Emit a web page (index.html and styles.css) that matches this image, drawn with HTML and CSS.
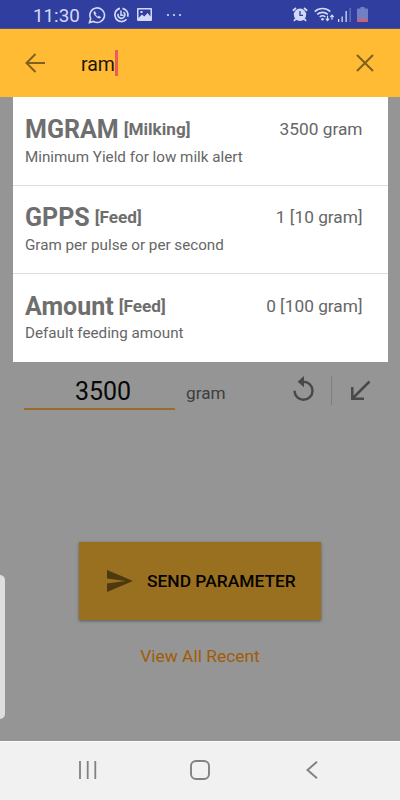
FILE: index.html
```
<!DOCTYPE html>
<html lang="en">

<head>
    <meta charset="utf-8">
    <title>Send Parameter</title>
    <meta name="viewport" content="width=device-width, initial-scale=1">
    <link rel="stylesheet" href="styles.css">
</head>

<body>
    <header class="status-bar">
        <span class="clock">11:30</span>
        <svg class="whatsapp" width="18" height="18" viewBox="0 0 18 18" fill="none" stroke="#d3daf5">
            <path d="M1.500 16.500l1.200-4A7.300 7.300 0 1 1 5.400 15.400z" stroke-width="1.600"/>
            <path d="M6.500 5.200c-1.500 1.500.2 4 1.600 5.300 1.500 1.400 3.600 2.400 4.600.8l-1.900-1.200-1.100.9c-1-.5-1.900-1.400-2.400-2.400l.8-1z" fill="#d3daf5" stroke-width=".6"/>
        </svg>
        <svg class="sync" width="17" height="16" viewBox="0 0 17 16" fill="none" stroke="#d3daf5" stroke-width="1.700">
            <path d="M7 1.300A6.700 6.700 0 1 0 13.500 12.300M9.500 1.300A6.700 6.700 0 0 1 14.700 9.800"/>
            <path d="M10.500 5.200a3.400 3.400 0 1 1-5.300 1.600M8 3.500v4.700h2.500" stroke-width="1.500"/>
        </svg>
        <svg class="photo" width="15" height="13" viewBox="0 0 15 13">
            <path fill="#d3daf5" fill-rule="evenodd" d="M1 0h13a1 1 0 0 1 1 1v11a1 1 0 0 1-1 1H1a1 1 0 0 1-1-1V1a1 1 0 0 1 1-1zm.5 1.500v8.500L5 6.500l2.300 2L10.500 5l3 3.500v-7zM3.500 3h2v2h-2z"/>
        </svg>
        <svg class="more" width="16" height="4" viewBox="0 0 16 4" fill="#d3daf5">
            <circle cx="2" cy="2" r="1.100"/><circle cx="8" cy="2" r="1.100"/><circle cx="14" cy="2" r="1.100"/>
        </svg>
        <svg class="alarm" width="16" height="15" viewBox="0 0 16 15">
            <path d="M.8 3.700L4 1M15.200 3.700L12 1M3.500 12L2 14M12.500 12l1.500 2" stroke="#d3daf5" stroke-width="1.800"/>
            <circle cx="8" cy="7.800" r="6.200" fill="#d3daf5"/>
            <path d="M8 4v4.300h3" fill="none" stroke="#303f9f" stroke-width="1.300"/>
        </svg>
        <svg class="wifi" width="21" height="15" viewBox="0 0 21 15" fill="none" stroke="#d3daf5" stroke-width="1.600">
            <path d="M.7 4.600a11.500 11.500 0 0 1 15.600 0M3.200 7.400a8 8 0 0 1 10.600 0M5.700 10a4.500 4.500 0 0 1 5.600-.2"/>
            <circle cx="8.500" cy="12.200" r="1.300" fill="#d3daf5" stroke="none"/>
            <path d="M13.500 8.800v4.500M11.800 11.600l1.700 1.900 1.700-1.900M18 12.800V8.300M16.300 10L18 8.100 19.700 10" stroke-width="1.200"/>
        </svg>
        <svg class="signal" width="14" height="14" viewBox="0 0 14 14" fill="#d3daf5">
            <path d="M0 11h1.300v3H0zM3.500 8.500h1.300V14H3.500zM7.500 3h1.300v11H7.500z"/>
            <path d="M11.500 0h1.300v14h-1.300z" opacity=".35"/>
        </svg>
        <svg class="battery" width="11" height="15" viewBox="0 0 11 15">
            <path fill="#7180c4" d="M3.500 0h4v1.500H10a1 1 0 0 1 1 1V12H0V2.500a1 1 0 0 1 1-1h2.500z"/>
            <path fill="#c7666f" d="M0 12h11v2a1 1 0 0 1-1 1H1a1 1 0 0 1-1-1z"/>
        </svg>
    </header>

    <div class="search-bar">
        <svg class="back" width="20" height="20" viewBox="0 0 20 20" fill="none" stroke="#80601f" stroke-width="2">
            <path d="M20 10H1.500M10.500 1L1.500 10l9 9"/>
        </svg>
        <span class="query">ram</span>
        <span class="caret"></span>
        <svg class="clear" width="18" height="18" viewBox="0 0 18 18" fill="none" stroke="#80601f" stroke-width="2">
            <path d="M1 1l16 16M17 1L1 17"/>
        </svg>
    </div>

    <main>
        <ul class="results">
            <li>
                <div class="title-row">
                    <span class="name">MGRAM</span>
                    <span class="group">[Milking]</span>
                    <span class="value">3500 gram</span>
                </div>
                <p>Minimum Yield for low milk alert</p>
            </li>
            <li>
                <div class="title-row">
                    <span class="name">GPPS</span>
                    <span class="group">[Feed]</span>
                    <span class="value">1 [10 gram]</span>
                </div>
                <p>Gram per pulse or per second</p>
            </li>
            <li>
                <div class="title-row">
                    <span class="name">Amount</span>
                    <span class="group">[Feed]</span>
                    <span class="value">0 [100 gram]</span>
                </div>
                <p>Default feeding amount</p>
            </li>
        </ul>

        <div class="field-row">
            <span class="field">3500</span>
            <span class="unit">gram</span>
            <svg class="reset" width="22" height="26" viewBox="0 0 22 26">
                <path d="M10.500 5.700a9 9 0 1 1-9 9" fill="none" stroke="#494949" stroke-width="2.500"/>
                <path d="M11 0v11.200L4.600 5.700z" fill="#494949"/>
            </svg>
            <span class="divider"></span>
            <svg class="arrow" width="21" height="21" viewBox="0 0 21 21" fill="none" stroke="#494949" stroke-width="2.500">
                <path d="M19.500 1.500L2.500 18.500M2.300 7v11.700H14"/>
            </svg>
        </div>

        <div class="send">
            <svg width="26" height="22" viewBox="0 0 26 22">
                <path d="M0 0l26 11L0 22v-8.600L18.500 11 0 8.600z" fill="#4d3910"/>
            </svg>
            <span>SEND PARAMETER</span>
        </div>
        <a class="recent">View All Recent</a>
        <div class="edge-handle"></div>
    </main>

    <nav class="nav-bar">
        <svg width="18" height="18" viewBox="0 0 18 18" stroke="#818181" stroke-width="1.800">
            <path d="M1 0v18M8.700 0v18M16.300 0v18"/>
        </svg>
        <svg class="home" width="20" height="20" viewBox="0 0 20 20" fill="none" stroke="#818181" stroke-width="1.900">
            <rect x="1" y="1" width="18" height="18" rx="5"/>
        </svg>
        <svg width="12" height="18" viewBox="0 0 12 18" fill="none" stroke="#818181" stroke-width="1.900">
            <path d="M11 .7L1.500 9l9.500 8.300"/>
        </svg>
    </nav>
</body>

</html>
```
FILE: styles.css
```
body {
    margin: 0;
    height: 800px;
    display: flex;
    flex-direction: column;
    overflow: hidden;
    background: #959595;
    font-family: Roboto, "Liberation Sans", sans-serif;
}

svg {
    display: block;
    flex: none;
}

/* status bar */
.status-bar {
    display: flex;
    align-items: center;
    height: 29px;
    box-sizing: border-box;
    padding: 1px 0 0 33px;
    border-bottom: 1px solid #5c5277;
    background: #303f9f;
}

.clock {
    width: 55px;
    color: #d3daf5;
    font-size: 18.8px;
    line-height: 26px;
    padding-top: 2px;
}

.sync {
    margin-left: 7px;
}

.photo {
    margin-left: 7px;
}

.more {
    margin-left: 14px;
}

.alarm {
    margin-left: 110px;
}

.wifi {
    margin-left: 6px;
}

.signal {
    margin-left: 3px;
}

.battery {
    margin-left: 5px;
}

/* search bar */
.search-bar {
    display: flex;
    align-items: center;
    height: 68px;
    padding: 0 26px 0 25px;
    background: #ffbb33;
}

.query {
    margin-left: 36px;
    padding-top: 2px;
    font-size: 19.5px;
    color: #1c1608;
}

.caret {
    width: 3px;
    height: 26px;
    background: #f05a55;
}

.clear {
    margin-left: auto;
}

main {
    position: relative;
    flex: 1;
}

/* search results */
.results {
    margin: 0 12.5px;
    padding: 0;
    list-style: none;
    background: #fff;
    color: #6e6e6e;
}

.results li {
    height: 88px;
    box-sizing: border-box;
    padding: 17px 25px 0 12.500px;
}

.results li + li {
    padding-top: 16px;
    border-top: 1px solid #dcdcdc;
}

.results li:last-child {
    height: 88.500px;
    padding-top: 17px;
}

.title-row {
    display: flex;
    align-items: center;
    line-height: 30px;
}

.name {
    padding-top: 1px;
    font-size: 25px;
    font-weight: bold;
}

.group,
.value {
    padding-bottom: 2px;
    line-height: 28px;
}

.group {
    margin-left: 5px;
    font-size: 17.2px;
    font-weight: bold;
}

.value {
    margin-left: auto;
    font-size: 17.3px;
    color: #666;
}

.results p {
    margin: 2px 0 0;
    font-size: 15.2px;
    line-height: 20px;
    color: #666;
}

.results li:last-child p {
    margin-top: 1px;
}

/* parameter value */
.field-row {
    display: flex;
    align-items: center;
    height: 48.500px;
    padding: 0 29px 0 24px;
}

.field {
    width: 151px;
    height: 48.500px;
    box-sizing: border-box;
    padding-left: 7px;
    border-bottom: 2px solid #996c2c;
    text-align: center;
    font-size: 25px;
    line-height: 60px;
    color: #080808;
}

.unit {
    margin: 15px 0 0 11px;
    font-size: 17.2px;
    color: #3e3e3e;
}

.reset {
    margin-left: auto;
    margin-top: 7px;
}

.divider {
    width: 1px;
    height: 29px;
    margin: 10px 18px 0 16px;
    background: #7f7f7f;
}

.arrow {
    margin-top: 9px;
}

/* actions */
.send {
    display: flex;
    align-items: center;
    width: 242px;
    height: 78px;
    box-sizing: border-box;
    margin: 132px auto 0 79px;
    padding-left: 28px;
    background: #997020;
    box-shadow: 0 1px 3px rgba(0, 0, 0, 0.4);
}

.send span {
    margin-left: 14px;
    font-size: 17.4px;
    font-weight: 500;
    color: #060401;
    white-space: nowrap;
}

.recent {
    display: block;
    margin-top: 26px;
    text-align: center;
    font-size: 17.4px;
    line-height: 20px;
    color: #a05c05;
}

/* samsung edge panel, floats over the page */
.edge-handle {
    position: absolute;
    left: 0;
    top: 478px;
    width: 5px;
    height: 144px;
    border-radius: 0 5px 5px 0;
    background: #dedede;
}

.nav-bar {
    display: flex;
    align-items: center;
    justify-content: space-between;
    height: 59px;
    box-sizing: border-box;
    padding: 0 82px 2px 79px;
    border-top: 1px solid #fafafa;
    background: #f1f1f1;
}

.home {
    margin-right: 3px;
}
```
